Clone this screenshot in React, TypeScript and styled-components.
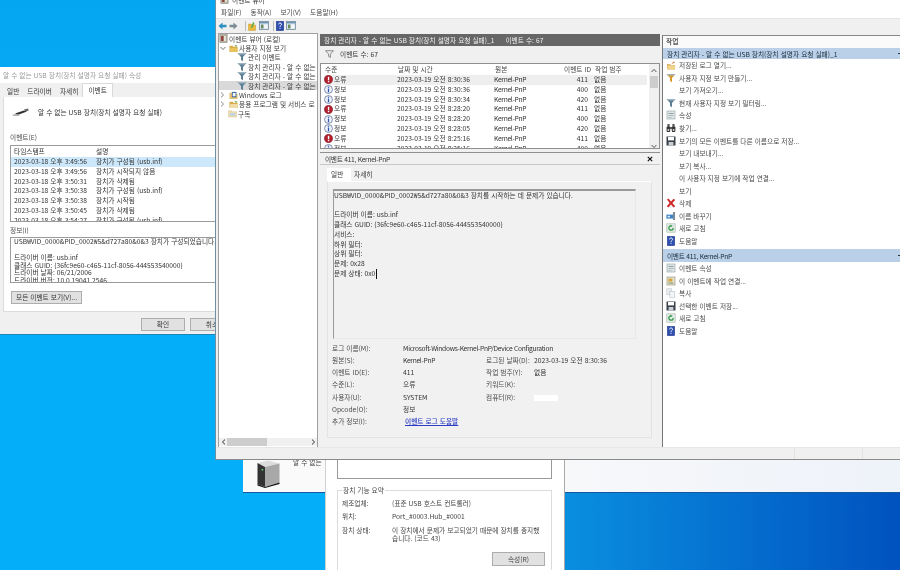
import React, { ReactNode } from "react";
import styled, { createGlobalStyle } from "styled-components";

const GlobalStyle = createGlobalStyle`
  html, body {
    margin: 0;
    padding: 0;
    background: #05aef8;
  }
  * {
    box-sizing: border-box;
  }
`;

const FONT = `"Noto Sans CJK KR", "Noto Sans", "Liberation Sans", sans-serif`;

const Desktop = styled.div`
  position: relative;
  width: 900px;
  height: 570px;
  overflow: hidden;
  font-family: ${FONT};
  font-size: 6.7px;
  word-spacing: 0.5px;
  line-height: 10px;
  color: #333;
  filter: blur(0.25px);
  background:
    linear-gradient(180deg, rgba(0, 100, 190, 0.1) 0, rgba(0, 100, 190, 0) 60%),
    linear-gradient(90deg, #05aef8 0, #05aef8 36%, #0a90e0 62%, #0052bf 100%);
`;

const Latin = styled.span`
  letter-spacing: -0.3px;
`;

/* ---------- windows on the desktop ---------- */

const Win = styled.div<{ $x: number; $y: number; $w: number; $h: number }>`
  position: absolute;
  left: ${p => p.$x}px;
  top: ${p => p.$y}px;
  width: ${p => p.$w}px;
  height: ${p => p.$h}px;
  background: #fff;
  display: flex;
  flex-direction: column;
`;

/* ---------- left properties dialog ---------- */

const PropsWindow = styled(Win)`
  background: #f0f0f0;
  border-bottom: 1px solid #1b86b8;
`;

const PropsTitle = styled.div`
  height: 16px;
  padding: 3px 3px 0;
  background: #fff;
  color: #9a9a9a;
  white-space: nowrap;
`;

const PropsTabs = styled.div`
  display: flex;
  align-items: flex-end;
  height: 14px;
  padding-left: 3px;
`;

const PropsTab = styled.div<{ $on?: boolean }>`
  height: ${p => (p.$on ? 14 : 11)}px;
  padding: ${p => (p.$on ? "1px 5px 0" : "0 4px")};
  background: ${p => (p.$on ? "#fff" : "transparent")};
  border: ${p => (p.$on ? "1px solid #d9d9d9" : "none")};
  border-bottom: none;
  white-space: nowrap;
`;

const PropsBody = styled.div`
  margin-left: 3px;
  height: 215px;
  padding-left: 6px;
  background: #fff;
  border-left: 1px solid #dcdcdc;
  border-bottom: 1px solid #dcdcdc;
`;

const DeviceRow = styled.div`
  display: flex;
  align-items: center;
  gap: 9px;
  height: 30px;
  padding-left: 2px;
  white-space: nowrap;
`;

const GroupLabel = styled.div<{ $top: number }>`
  margin-top: ${p => p.$top}px;
  height: 12px;
  line-height: 12px;
  color: #4a4a4a;
  white-space: nowrap;
`;

const EventsBox = styled.div`
  height: 77px;
  margin-top: 2px;
  border: 1px solid #9b9b9b;
  border-right: none;
  overflow: hidden;
`;

const EventsHead = styled.div`
  display: grid;
  grid-template-columns: 82px 1fr;
  height: 11px;
  padding-left: 3px;
`;

const EventsRow = styled.div<{ $on?: boolean }>`
  display: grid;
  grid-template-columns: 82px 1fr;
  height: 9.8px;
  padding-left: 3px;
  white-space: nowrap;
  line-height: 9.8px;
  background: ${p => (p.$on ? "#cde8fb" : "transparent")};
`;

const InfoBox = styled.div`
  height: 46px;
  margin-top: 1px;
  padding-left: 3px;
  border: 1px solid #9b9b9b;
  border-right: none;
  overflow: hidden;
  white-space: nowrap;
  line-height: 7.6px;
`;

const Gap = styled.div`
  height: 8.4px;
`;

const GrayButton = styled.div<{ $w: number; $h?: number }>`
  flex: none;
  width: ${p => p.$w}px;
  height: ${p => p.$h ?? 13}px;
  border: 1px solid #adadad;
  background: #e1e1e1;
  text-align: center;
  line-height: ${p => (p.$h ?? 13) - 2}px;
  white-space: nowrap;
  overflow: hidden;
`;

const AllEventsRow = styled.div`
  margin: 8px 0 0 1px;
`;

const PropsFooter = styled.div`
  display: flex;
  gap: 5px;
  padding: 6px 0 0 141px;
`;

/* ---------- event viewer ---------- */

const ViewerWindow = styled(Win)`
  background: #f0f0f0;
  border-left: 1px solid #6f8fa3;
  border-bottom: 1px solid #8a8a8a;
`;

const TitleStrip = styled.div`
  display: flex;
  align-items: flex-start;
  gap: 3px;
  height: 6px;
  padding-left: 4px;
  background: #fff;
  overflow: hidden;
  & > * {
    margin-top: -5px;
  }
`;

const MenuBar = styled.div`
  display: flex;
  gap: 9px;
  height: 13px;
  padding: 1px 0 0 5px;
  background: #fff;
  border-bottom: 1px solid #e4e4e4;
  color: #444;
`;

const ToolBar = styled.div`
  display: flex;
  align-items: center;
  height: 13px;
  padding-left: 2px;
`;

const ToolSep = styled.div<{ $l: number; $r: number }>`
  width: 1px;
  height: 10px;
  margin: 0 ${p => p.$r}px 0 ${p => p.$l}px;
  background: #bbb;
`;

const ToolSlot = styled.div<{ $r: number }>`
  display: flex;
  margin-right: ${p => p.$r}px;
`;

const ViewerBody = styled.div`
  flex: 1;
  min-height: 0;
  display: grid;
  grid-template-columns: 100px 340px 1fr;
  column-gap: 2px;
  padding: 1px 0 0 2px;
`;

const TreePane = styled.div`
  display: flex;
  flex-direction: column;
  min-width: 0;
  background: #fff;
  border: 1px solid #a0a0a0;
  border-bottom: none;
`;

const TreeRow = styled.div<{ $depth: number; $on?: boolean }>`
  display: flex;
  align-items: center;
  gap: 1px;
  height: 9.4px;
  padding-left: ${p => p.$depth}px;
  white-space: nowrap;
  overflow: hidden;
  background: ${p => (p.$on ? "#d9d9d9" : "transparent")};
  color: #3c3c3c;
`;

const ChevronSlot = styled.span`
  width: 8px;
  flex: none;
  display: flex;
`;

const TreeSpacer = styled.div`
  flex: 1;
`;

const HScroll = styled.div`
  display: flex;
  align-items: center;
  height: 8px;
  margin-bottom: 1px;
  background: #f0f0f0;
`;

const HThumb = styled.div`
  width: 40px;
  height: 8px;
  background: #cdcdcd;
`;

const HArrow = styled.span<{ $right?: boolean }>`
  display: flex;
  justify-content: center;
  width: 8px;
  margin-left: ${p => (p.$right ? "auto" : "0")};
`;

const CenterPane = styled.div`
  display: flex;
  flex-direction: column;
  min-width: 0;
  margin-top: 1px;
`;

const DarkHeader = styled.div`
  display: flex;
  gap: 11px;
  height: 12px;
  padding: 1px 0 0 4px;
  background: #666;
  color: #f0f0f0;
  white-space: nowrap;
`;

const CountBar = styled.div`
  display: flex;
  align-items: center;
  gap: 6px;
  height: 16px;
  padding-left: 5px;
`;

const ListFrame = styled.div`
  height: 86px;
  margin-top: 1px;
  display: grid;
  grid-template-columns: 1fr 10px;
  background: #fff;
  border: 1px solid #8f8f8f;
  overflow: hidden;
`;

const ListBody = styled.div`
  padding: 0 2px 0 3px;
`;

const Cols = "73px 97px 48px 52px 1fr";

const ListHead = styled.div`
  display: grid;
  grid-template-columns: ${Cols};
  height: 11px;
  line-height: 10px;
  color: #444;
  white-space: nowrap;
`;

const HeadCell = styled.span<{ $right?: boolean }>`
  padding-left: ${p => (p.$right ? "0" : "1px")};
  padding-right: ${p => (p.$right ? "3px" : "0")};
  text-align: ${p => (p.$right ? "right" : "left")};
`;

const ListRow = styled.div<{ $on?: boolean }>`
  display: grid;
  grid-template-columns: ${Cols};
  height: 9.8px;
  white-space: nowrap;
  line-height: 9.8px;
  background: ${p => (p.$on ? "#eeeeee" : "transparent")};
`;

const LevelCell = styled.span`
  display: flex;
  align-items: center;
  gap: 1px;
`;

const RightCell = styled.span`
  text-align: right;
  padding-right: 6px;
`;

const VScroll = styled.div`
  display: flex;
  flex-direction: column;
  align-items: center;
  padding-top: 4px;
  background: #f0f0f0;
`;

const VThumb = styled.div`
  width: 8px;
  height: 12px;
  margin-top: 3px;
  background: #cdcdcd;
`;

const VDown = styled.span`
  display: flex;
  margin-top: auto;
  margin-bottom: 4px;
`;

const DetailPane = styled.div`
  margin-top: 3px;
  flex: 1;
  min-height: 0;
  display: flex;
  flex-direction: column;
  background: #f1f1f1;
  border-top: 1px solid #8f8f8f;
`;

const DetailHeader = styled.div`
  display: flex;
  justify-content: space-between;
  height: 12px;
  padding: 1px 7px 0 5px;
  border-bottom: 1px solid #c9c9c9;
`;

const CloseMark = styled.span`
  display: flex;
  align-items: center;
  height: 10px;
`;

const DetailTabs = styled.div`
  display: flex;
  height: 16px;
  padding: 3px 0 0 7px;
`;

const DetailTab = styled.div<{ $on?: boolean }>`
  height: 13px;
  width: ${p => (p.$on ? 24 : 26)}px;
  padding: 1px 0 0 ${p => (p.$on ? 4 : 3)}px;
  background: ${p => (p.$on ? "#fff" : "transparent")};
  color: #333;
`;

const DetailFrame = styled.div`
  flex: 1;
  margin: 0 8px 9px 7px;
  padding: 7px 0 0 5px;
  border: 1px solid #e3e3e3;
  border-top-color: #fff;
`;

const MessageBox = styled.div`
  width: 303px;
  height: 150px;
  border: 1px solid #9a9a9a;
  border-top-width: 2px;
  border-right-color: #e8e8e8;
  border-bottom-color: #e8e8e8;
  color: #333;
  white-space: nowrap;
  line-height: 9.7px;
`;

const Caret = styled.span`
  display: inline-block;
  width: 1px;
  height: 10px;
  margin-left: 1px;
  vertical-align: top;
  background: #111;
`;

const MetaGrid = styled.div`
  display: grid;
  grid-template-columns: 71px 83px 48px 1fr;
  grid-auto-rows: 12.3px;
  margin: 2.5px 0 0 -1px;
  white-space: nowrap;
  line-height: 12.3px;
`;

const MetaLabel = styled.span`
  color: #4a4a4a;
`;

const MetaWide = styled.span`
  grid-column: 2 / 5;
`;

const HelpLink = styled.a`
  grid-column: 2 / 5;
  margin-left: 2px;
  color: #2a3cc4;
  font-weight: 500;
  text-decoration: underline;
`;

const Redacted = styled.span`
  display: inline-block;
  width: 24px;
  height: 6px;
  background: #fff;
  vertical-align: middle;
`;

const ActionsPane = styled.div`
  display: flex;
  flex-direction: column;
  min-width: 0;
  margin-top: 2px;
  background: #fff;
  border-left: 1px solid #777;
  border-top: 1px solid #888;
`;

const ActionsTitle = styled.div`
  height: 12px;
  padding: 0 0 0 3px;
  color: #222;
  font-weight: 500;
  background: #fafafa;
  line-height: 11px;
`;

const ActionHeader = styled.div<{ $top?: number }>`
  display: flex;
  align-items: center;
  justify-content: space-between;
  flex: none;
  height: ${p => (p.$top ? 12.6 : 11)}px;
  margin-top: ${p => p.$top ?? 0}px;
  padding-left: 4px;
  background: #b9d0e8;
  color: #20303f;
  white-space: nowrap;
`;

const HeaderTick = styled.span`
  width: 2px;
  height: 1px;
  background: #333;
`;

const ActionRow = styled.div`
  display: flex;
  align-items: center;
  flex: none;
  height: 12.55px;
  padding-left: 3px;
  gap: 3px;
  white-space: nowrap;
  color: #4a4a4a;
`;

const IconSlot = styled.span`
  width: 10px;
  height: 10px;
  flex: none;
  display: flex;
  align-items: center;
  justify-content: center;
`;

const StatusBar = styled.div`
  display: flex;
  flex: none;
  height: 12px;
  border-top: 1px solid #e6e6e6;
`;

const StatusCell = styled.div<{ $w: number }>`
  width: ${p => p.$w}px;
  border-right: 1px solid #e2e2e2;
`;

/* ---------- windows behind the viewer ---------- */

const DevicePanel = styled(Win)`
  flex-direction: row;
  align-items: flex-start;
  gap: 13px;
  padding: 5px 0 0 14px;
  color: #444;
  background: linear-gradient(90deg, #fafafa 0, #f7f8fa 50%, #eef2f9 100%);
  border-bottom: 1px solid #14599f;
`;

const DeviceName = styled.span`
  margin-top: -3px;
  white-space: nowrap;
`;

const DeviceDialog = styled(Win)`
  padding: 0 12px 0 11px;
  border-left: 1px solid #d0d0d0;
  border-right: 1px solid #a8a8a8;
`;

const ListRemnant = styled.div`
  flex: none;
  height: 29px;
  border: 1px solid #999;
  border-top: none;
`;

const SummaryBox = styled.fieldset`
  flex: none;
  margin: 7px 0 0;
  padding: 4px 6px 0 4px;
  min-width: 0;
  height: 85px;
  border: 1px solid #dcdcdc;
  border-bottom: none;
  color: #444;
  legend {
    padding: 0 1px;
    margin-left: 0;
    line-height: 9px;
  }
`;

const SummaryGrid = styled.div`
  display: grid;
  grid-template-columns: 50px 1fr;
  grid-auto-rows: 13.3px;
  line-height: 8px;
  white-space: nowrap;
`;

const SummaryButtonRow = styled.div`
  display: flex;
  justify-content: flex-end;
  margin-top: 13px;
`;

/* ---------- icons ---------- */

const ErrorIcon = () => (
  <svg width="9" height="9" viewBox="0 0 10 10">
    <circle cx="5" cy="5" r="4.6" fill="#b3202c" stroke="#7a1a2a" strokeWidth="0.6" />
    <rect x="4.3" y="2" width="1.5" height="3.8" fill="#fff" />
    <rect x="4.3" y="6.5" width="1.5" height="1.5" fill="#fff" />
  </svg>
);

const InfoIcon = () => (
  <svg width="9" height="9" viewBox="0 0 10 10">
    <circle cx="5" cy="5" r="4.4" fill="#eef3fb" stroke="#56698f" strokeWidth="0.8" />
    <rect x="4.3" y="1.8" width="1.4" height="1.3" fill="#2c55a8" />
    <rect x="4.3" y="3.9" width="1.4" height="4.2" fill="#2c55a8" />
  </svg>
);

const Funnel = ({ color = "#5d7f94", size = 9 }: { color?: string; size?: number }) => (
  <svg width={size} height={size} viewBox="0 0 10 10" style={{ flex: "none" }}>
    <path d="M0.5 1h9L6 5v4.2L4 8V5z" fill={color} />
    <path d="M0.5 1h9L8 2.6H2z" fill="#9eb3c1" />
  </svg>
);

const OutlineFunnel = () => (
  <svg width="9" height="8" viewBox="0 0 10 9">
    <path d="M0.5 0.8h9L6 4.6v3.8L4 7.2V4.6z" fill="#eee" stroke="#666" strokeWidth="0.8" />
  </svg>
);

const FolderIcon = ({ open = "#e9c25c" }: { open?: string }) => (
  <svg width="9" height="9" viewBox="0 0 10 10" style={{ flex: "none" }}>
    <path d="M0.5 2h3.5l1 1h4.5v6h-9z" fill="#d9ac4a" />
    <path d="M1.5 4.5h8.2l-1 4.5h-8.2z" fill={open} />
    <path d="M6 0.8l3 1-1 1.4z" fill="#5b9c4a" />
  </svg>
);

const ViewerIcon = () => (
  <svg width="9" height="9" viewBox="0 0 10 10" style={{ flex: "none" }}>
    <rect x="1" y="0.8" width="8" height="8.4" fill="#b9b6a6" stroke="#77736a" strokeWidth="0.6" />
    <rect x="2.4" y="2.2" width="2.6" height="5.6" fill="#8f3d3a" />
    <rect x="5.6" y="2.2" width="2" height="5.6" fill="#e8e6da" />
  </svg>
);

const LogBookIcon = () => (
  <svg width="9" height="9" viewBox="0 0 10 10" style={{ flex: "none" }}>
    <path d="M0.5 2h3.5l1 1h4.5v6h-9z" fill="#e2c170" />
    <rect x="3.2" y="1" width="5" height="6" fill="#3f6fa8" />
    <rect x="4.2" y="2.2" width="3" height="3.6" fill="#fff" />
  </svg>
);

const SubscribeIcon = () => (
  <svg width="9" height="9" viewBox="0 0 10 10" style={{ flex: "none" }}>
    <path d="M0.5 2h3.5l1 1h4.5v6h-9z" fill="#efdca8" stroke="#c9b37e" strokeWidth="0.4" />
    <rect x="2" y="4.5" width="6" height="3" fill="#bcd3ea" />
  </svg>
);

const ChevronDown = ({ color = "#777" }: { color?: string }) => (
  <svg width="6" height="5" viewBox="0 0 6 5">
    <path d="M0.6 1l2.4 2.6L5.4 1" fill="none" stroke={color} strokeWidth="1" />
  </svg>
);

const ChevronUp = ({ color = "#555" }: { color?: string }) => (
  <svg width="6" height="5" viewBox="0 0 6 5">
    <path d="M0.6 4L3 1.4 5.4 4" fill="none" stroke={color} strokeWidth="1" />
  </svg>
);

const ChevronRight = ({ color = "#888" }: { color?: string }) => (
  <svg width="5" height="6" viewBox="0 0 5 6">
    <path d="M1 0.6L3.6 3 1 5.4" fill="none" stroke={color} strokeWidth="1" />
  </svg>
);

const ChevronLeft = ({ color = "#333" }: { color?: string }) => (
  <svg width="5" height="6" viewBox="0 0 5 6">
    <path d="M4 0.6L1.4 3 4 5.4" fill="none" stroke={color} strokeWidth="1" />
  </svg>
);

const ArrowIcon = ({ right, color }: { right?: boolean; color: string }) => (
  <svg width="9" height="8" viewBox="0 0 10 9">
    <path
      d={right ? "M0.5 3h4.5V0.6L9.5 4.5 5 8.4V6H0.5z" : "M9.5 3H5V0.6L0.5 4.5 5 8.4V6h4.5z"}
      fill={color}
    />
  </svg>
);

const PaneIcon = () => (
  <svg width="10" height="9" viewBox="0 0 10 9">
    <rect x="0.4" y="0.4" width="9.2" height="8.2" fill="#d4e3ef" stroke="#64808f" strokeWidth="0.7" />
    <rect x="0.8" y="0.8" width="8.4" height="1.6" fill="#6d95b3" />
    <rect x="2" y="3.6" width="2.4" height="3.8" fill="#6a8a5c" />
    <rect x="5.2" y="3.6" width="3.2" height="3.8" fill="#f7f7f7" />
  </svg>
);

const ToolFolder = () => (
  <svg width="8" height="10" viewBox="0 0 10 10" preserveAspectRatio="none">
    <path d="M0.5 3h3.4l1 1h4.6v5.5h-9z" fill="#e8b93c" stroke="#b98d22" strokeWidth="0.4" />
    <path d="M3.5 6.2L6.5 1l1.6 1-3 5z" fill="#5fa845" />
  </svg>
);

const HelpIcon = ({ w = 8, h = 10 }: { w?: number; h?: number }) => (
  <svg width={w} height={h} viewBox="0 0 8 10" preserveAspectRatio="none">
    <rect x="0.3" y="0.3" width="7.4" height="9.4" fill="#2f4fb0" stroke="#1f3480" strokeWidth="0.5" />
    <path
      d="M2.6 3.4C2.6 2.4 3.3 2 4 2c.9 0 1.5.5 1.5 1.3 0 1.2-1.5 1.2-1.5 2.6"
      fill="none"
      stroke="#fff"
      strokeWidth="1"
    />
    <rect x="3.5" y="6.8" width="1" height="1" fill="#fff" />
  </svg>
);

const OpenLogIcon = () => (
  <svg width="10" height="10" viewBox="0 0 10 10">
    <path d="M1 4h3l1 1h4v4.4H1z" fill="#dcb56a" />
    <path d="M2 5.6h7.6L8.4 9.4H1z" fill="#f0d48d" />
    <path d="M5.4 4L8 1.2l.8 1.6z" fill="#d2733a" />
  </svg>
);

const SheetIcon = () => (
  <svg width="10" height="10" viewBox="0 0 10 10">
    <rect x="1" y="1" width="8" height="8" fill="#dfe5e6" stroke="#8fa0a6" strokeWidth="0.6" />
    <rect x="2.5" y="3" width="5" height="0.9" fill="#8a9aa0" />
    <rect x="2.5" y="5" width="5" height="0.9" fill="#a8b4b8" />
    <rect x="2.5" y="7" width="3" height="0.7" fill="#a8b4b8" />
  </svg>
);

const TaskSheetIcon = () => (
  <svg width="10" height="10" viewBox="0 0 10 10">
    <rect x="1" y="1" width="8" height="8" fill="#e5e3cf" stroke="#8c8a76" strokeWidth="0.6" />
    <rect x="2.4" y="2.6" width="4" height="3" fill="#d9a641" />
    <rect x="2.4" y="6.6" width="5" height="0.9" fill="#6c8a5a" />
  </svg>
);

const FindIcon = () => (
  <svg width="10" height="10" viewBox="0 0 10 10">
    <rect x="0.6" y="3.4" width="3.6" height="5.6" rx="1" fill="#333" />
    <rect x="5.8" y="3.4" width="3.6" height="5.6" rx="1" fill="#333" />
    <rect x="3.6" y="4" width="2.8" height="2" fill="#555" />
    <rect x="1.4" y="1" width="2.2" height="3" fill="#555" />
    <rect x="6.4" y="1" width="2.2" height="3" fill="#555" />
    <circle cx="2.4" cy="7" r="1" fill="#cfd8dc" />
    <circle cx="7.6" cy="7" r="1" fill="#cfd8dc" />
  </svg>
);

const SaveIcon = () => (
  <svg width="10" height="10" viewBox="0 0 10 10">
    <rect x="0.5" y="0.5" width="9" height="9" fill="#39424a" />
    <rect x="2" y="1" width="6" height="3.4" fill="#fff" />
    <rect x="2.6" y="6" width="4.8" height="3.5" fill="#c9ced2" />
  </svg>
);

const DeleteIcon = () => (
  <svg width="10" height="10" viewBox="0 0 10 10">
    <path d="M1 1.6l1.6-1L5 3.4 7.6.8l1.6 1.2L6.4 5l2.8 3.2-1.6 1.2L5 6.6 2.4 9.4.8 8.2 3.6 5z" fill="#cf2a2a" />
  </svg>
);

const RenameIcon = () => (
  <svg width="10" height="10" viewBox="0 0 10 10">
    <rect x="0.4" y="3.6" width="7" height="4" fill="#3f86c6" />
    <rect x="1.6" y="4.8" width="2.4" height="1.6" fill="#d8ecfa" />
    <rect x="7" y="1" width="2" height="8" fill="#7a8a96" />
  </svg>
);

const RefreshIcon = () => (
  <svg width="10" height="10" viewBox="0 0 10 10">
    <rect x="0.8" y="0.8" width="8.4" height="8.4" fill="#e3ebe6" stroke="#a4b3ac" strokeWidth="0.6" />
    <path d="M7.2 5A2.2 2.2 0 1 1 5 2.8" fill="none" stroke="#3a9c4e" strokeWidth="1.3" />
    <path d="M4.4 1.4L6.8 2.9 4.4 4.3z" fill="#3a9c4e" />
  </svg>
);

const CopyIcon = () => (
  <svg width="10" height="10" viewBox="0 0 10 10">
    <rect x="0.8" y="0.8" width="5" height="6" fill="#e9edf0" stroke="#b6c0c7" strokeWidth="0.5" />
    <rect x="3.8" y="3.4" width="5" height="6" fill="#f2f4f6" stroke="#aeb9c1" strokeWidth="0.5" />
  </svg>
);

const CloseIcon = () => (
  <svg width="6" height="6" viewBox="0 0 6 6">
    <path d="M0.8 0.8l4.4 4.4M5.2 0.8L0.8 5.2" stroke="#111" strokeWidth="1.2" />
  </svg>
);

const UsbIcon = () => (
  <svg width="17" height="8" viewBox="0 0 17 8">
    <path d="M3 5.6L12 2.6l3 1-9 3.2z" fill="#2e2e2e" />
    <path d="M12 1.4L16 0.6l.8 1.8L13.6 3.6z" fill="#666" />
    <ellipse cx="4" cy="7" rx="3.8" ry="0.8" fill="#9a9a9a" />
  </svg>
);

const HubIcon = () => (
  <svg width="23" height="28" viewBox="0 0 23 28">
    <path d="M0.5 3L11 0.5l11.5 3L8 7z" fill="#dcdcdc" />
    <path d="M8 7l14.5-3.5v19L8 27z" fill="#a8a8a8" />
    <path d="M0.5 3L8 7v20l-7.5-3z" fill="#333" />
    <rect x="4.6" y="9" width="1.6" height="1.6" fill="#5fd06a" />
    <path d="M0.5 24L8 27l14.5-4.5V24L8 28 .5 25.5z" fill="#111" />
  </svg>
);

/* ---------- data ---------- */

const dialogEvents: [string, string][] = [
  ["2023-03-18 오후 3:49:56", "장치가 구성됨 (usb.inf)"],
  ["2023-03-18 오후 3:49:56", "장치가 시작되지 않음"],
  ["2023-03-18 오후 3:50:31", "장치가 삭제됨"],
  ["2023-03-18 오후 3:50:38", "장치가 구성됨 (usb.inf)"],
  ["2023-03-18 오후 3:50:38", "장치가 시작됨"],
  ["2023-03-18 오후 3:50:45", "장치가 삭제됨"],
  ["2023-03-18 오후 3:54:27", "장치가 구성됨 (usb.inf)"]
];

const listEvents: [boolean, string, string][] = [
  [true, "2023-03-19 오전 8:30:36", "411"],
  [false, "2023-03-19 오전 8:30:36", "400"],
  [false, "2023-03-19 오전 8:30:34", "420"],
  [true, "2023-03-19 오전 8:28:20", "411"],
  [false, "2023-03-19 오전 8:28:20", "400"],
  [false, "2023-03-19 오전 8:28:05", "420"],
  [true, "2023-03-19 오전 8:25:16", "411"],
  [false, "2023-03-19 오전 8:25:16", "400"]
];

const viewActions: [ReactNode, string][] = [
  [<OpenLogIcon />, "저장된 로그 열기..."],
  [<Funnel color="#d99a2b" size={10} />, "사용자 지정 보기 만들기..."],
  [null, "보기 가져오기..."],
  [<Funnel size={10} />, "현재 사용자 지정 보기 필터링..."],
  [<SheetIcon />, "속성"],
  [<FindIcon />, "찾기..."],
  [<SaveIcon />, "보기의 모든 이벤트를 다른 이름으로 저장..."],
  [null, "보기 내보내기..."],
  [null, "보기 복사..."],
  [null, "이 사용자 지정 보기에 작업 연결..."],
  [null, "보기"],
  [<DeleteIcon />, "삭제"],
  [<RenameIcon />, "이름 바꾸기"],
  [<RefreshIcon />, "새로 고침"],
  [<HelpIcon />, "도움말"]
];

const eventActions: [ReactNode, string][] = [
  [<SheetIcon />, "이벤트 속성"],
  [<TaskSheetIcon />, "이 이벤트에 작업 연결..."],
  [<CopyIcon />, "복사"],
  [<SaveIcon />, "선택한 이벤트 저장..."],
  [<RefreshIcon />, "새로 고침"],
  [<HelpIcon />, "도움말"]
];

const App: React.FC = () => {
  return (
    <Desktop>
      <GlobalStyle />

      <PropsWindow $x={0} $y={67} $w={216} $h={268}>
        <PropsTitle>알 수 없는 USB 장치(장치 설명자 요청 실패) 속성</PropsTitle>
        <PropsTabs>
          <PropsTab>일반</PropsTab>
          <PropsTab>드라이버</PropsTab>
          <PropsTab>자세히</PropsTab>
          <PropsTab $on>이벤트</PropsTab>
        </PropsTabs>
        <PropsBody>
          <DeviceRow>
            <UsbIcon />
            <span>알 수 없는 USB 장치(장치 설명자 요청 실패)</span>
          </DeviceRow>
          <GroupLabel $top={4}>이벤트(E)</GroupLabel>
          <EventsBox>
            <EventsHead>
              <span>타임스탬프</span>
              <span>설명</span>
            </EventsHead>
            {dialogEvents.map((ev, i) => (
              <EventsRow key={i} $on={i === 0}>
                <span>{ev[0]}</span>
                <span>{ev[1]}</span>
              </EventsRow>
            ))}
          </EventsBox>
          <GroupLabel $top={2}>정보(I)</GroupLabel>
          <InfoBox>
            USB₩VID_0000&amp;PID_0002₩5&amp;d727a80&amp;0&amp;3 장치가 구성되었습니다.
            <Gap />
            드라이버 이름: usb.inf
            <br />
            클래스 GUID: {"{36fc9e60-c465-11cf-8056-444553540000}"}
            <br />
            드라이버 날짜: 06/21/2006
            <br />
            드라이버 버전: 10.0.19041.2546
          </InfoBox>
          <AllEventsRow>
            <GrayButton $w={71}>모든 이벤트 보기(V)...</GrayButton>
          </AllEventsRow>
        </PropsBody>
        <PropsFooter>
          <GrayButton $w={44}>확인</GrayButton>
          <GrayButton $w={44}>취소</GrayButton>
        </PropsFooter>
      </PropsWindow>

      <DevicePanel $x={243} $y={455} $w={657} $h={38}>
        <HubIcon />
        <DeviceName>알 수 없는</DeviceName>
      </DevicePanel>

      <DeviceDialog $x={325} $y={450} $w={240} $h={120}>
        <ListRemnant />
        <SummaryBox>
          <legend>장치 기능 요약</legend>
          <SummaryGrid>
            <span>제조업체:</span>
            <span>(표준 USB 호스트 컨트롤러)</span>
            <span>위치:</span>
            <span>Port_#0003.Hub_#0001</span>
            <span>장치 상태:</span>
            <span>
              이 장치에서 문제가 보고되었기 때문에 장치를 중지했
              <br />
              습니다. (코드 43)
            </span>
          </SummaryGrid>
          <SummaryButtonRow>
            <GrayButton $w={53} $h={14}>
              속성(R)
            </GrayButton>
          </SummaryButtonRow>
        </SummaryBox>
      </DeviceDialog>

      <ViewerWindow $x={215} $y={0} $w={685} $h={460}>
        <TitleStrip>
          <ViewerIcon />
          <span>이벤트 뷰어</span>
        </TitleStrip>
        <MenuBar>
          <span>파일(F)</span>
          <span>동작(A)</span>
          <span>보기(V)</span>
          <span>도움말(H)</span>
        </MenuBar>
        <ToolBar>
          <ToolSlot $r={2}>
            <ArrowIcon color="#2f8fc0" />
          </ToolSlot>
          <ToolSlot $r={0}>
            <ArrowIcon right color="#7d8b94" />
          </ToolSlot>
          <ToolSep $l={7} $r={2} />
          <ToolSlot $r={3}>
            <ToolFolder />
          </ToolSlot>
          <PaneIcon />
          <ToolSep $l={4} $r={2} />
          <ToolSlot $r={2}>
            <HelpIcon />
          </ToolSlot>
          <PaneIcon />
        </ToolBar>
        <ViewerBody>
          <TreePane>
            <TreeRow $depth={0}>
              <ViewerIcon />
              이벤트 뷰어 (로컬)
            </TreeRow>
            <TreeRow $depth={1}>
              <ChevronSlot>
                <ChevronDown />
              </ChevronSlot>
              <FolderIcon />
              사용자 지정 보기
            </TreeRow>
            <TreeRow $depth={18}>
              <Funnel size={10} />
              관리 이벤트
            </TreeRow>
            <TreeRow $depth={18}>
              <Funnel size={10} />
              장치 관리자 - 알 수 없는
            </TreeRow>
            <TreeRow $depth={18}>
              <Funnel size={10} />
              장치 관리자 - 알 수 없는
            </TreeRow>
            <TreeRow $depth={18} $on>
              <Funnel size={10} />
              장치 관리자 - 알 수 없는
            </TreeRow>
            <TreeRow $depth={1}>
              <ChevronSlot>
                <ChevronRight />
              </ChevronSlot>
              <LogBookIcon />
              Windows 로그
            </TreeRow>
            <TreeRow $depth={1}>
              <ChevronSlot>
                <ChevronRight />
              </ChevronSlot>
              <FolderIcon open="#efdca8" />
              응용 프로그램 및 서비스 로
            </TreeRow>
            <TreeRow $depth={9}>
              <SubscribeIcon />
              구독
            </TreeRow>
            <TreeSpacer />
            <HScroll>
              <HArrow>
                <ChevronLeft />
              </HArrow>
              <HThumb />
              <HArrow $right>
                <ChevronRight color="#333" />
              </HArrow>
            </HScroll>
          </TreePane>

          <CenterPane>
            <DarkHeader>
              <span>장치 관리자 - 알 수 없는 USB 장치(장치 설명자 요청 실패)_1</span>
              <span>이벤트 수: 67</span>
            </DarkHeader>
            <CountBar>
              <OutlineFunnel />
              이벤트 수: 67
            </CountBar>
            <ListFrame>
              <ListBody>
                <ListHead>
                  <HeadCell>수준</HeadCell>
                  <HeadCell>날짜 및 시간</HeadCell>
                  <HeadCell>원본</HeadCell>
                  <HeadCell $right>이벤트 ID</HeadCell>
                  <HeadCell>작업 범주</HeadCell>
                </ListHead>
                {listEvents.map((ev, i) => (
                  <ListRow key={i} $on={i === 0}>
                    <LevelCell>
                      {ev[0] ? <ErrorIcon /> : <InfoIcon />}
                      {ev[0] ? "오류" : "정보"}
                    </LevelCell>
                    <span>{ev[1]}</span>
                    <Latin>Kernel-PnP</Latin>
                    <RightCell>{ev[2]}</RightCell>
                    <span>없음</span>
                  </ListRow>
                ))}
              </ListBody>
              <VScroll>
                <ChevronUp />
                <VThumb />
                <VDown>
                  <ChevronDown color="#555" />
                </VDown>
              </VScroll>
            </ListFrame>

            <DetailPane>
              <DetailHeader>
                <Latin>이벤트 411, Kernel-PnP</Latin>
                <CloseMark>
                  <CloseIcon />
                </CloseMark>
              </DetailHeader>
              <DetailTabs>
                <DetailTab $on>일반</DetailTab>
                <DetailTab>자세히</DetailTab>
              </DetailTabs>
              <DetailFrame>
                <MessageBox>
                  USB₩VID_0000&amp;PID_0002₩5&amp;d727a80&amp;0&amp;3 장치를 시작하는 데 문제가 있습니다.
                  <br />
                  <br />
                  드라이버 이름: usb.inf
                  <br />
                  클래스 GUID: {"{36fc9e60-c465-11cf-8056-444553540000}"}
                  <br />
                  서비스:
                  <br />
                  하위 필터:
                  <br />
                  상위 필터:
                  <br />
                  문제: 0x28
                  <br />
                  문제 상태: 0x0
                  <Caret />
                </MessageBox>
                <MetaGrid>
                  <MetaLabel>로그 이름(M):</MetaLabel>
                  <MetaWide>
                    <Latin>Microsoft-Windows-Kernel-PnP/Device Configuration</Latin>
                  </MetaWide>
                  <MetaLabel>원본(S):</MetaLabel>
                  <Latin>Kernel-PnP</Latin>
                  <MetaLabel>로그된 날짜(D):</MetaLabel>
                  <span>2023-03-19 오전 8:30:36</span>
                  <MetaLabel>이벤트 ID(E):</MetaLabel>
                  <span>411</span>
                  <MetaLabel>작업 범주(Y):</MetaLabel>
                  <span>없음</span>
                  <MetaLabel>수준(L):</MetaLabel>
                  <span>오류</span>
                  <MetaLabel>키워드(K):</MetaLabel>
                  <span />
                  <MetaLabel>사용자(U):</MetaLabel>
                  <span>SYSTEM</span>
                  <MetaLabel>컴퓨터(R):</MetaLabel>
                  <span>
                    <Redacted />
                  </span>
                  <MetaLabel>Opcode(O):</MetaLabel>
                  <MetaWide>정보</MetaWide>
                  <MetaLabel>추가 정보(I):</MetaLabel>
                  <HelpLink>이벤트 로그 도움말</HelpLink>
                </MetaGrid>
              </DetailFrame>
            </DetailPane>
          </CenterPane>

          <ActionsPane>
            <ActionsTitle>작업</ActionsTitle>
            <ActionHeader>
              <span>장치 관리자 - 알 수 없는 USB 장치(장치 설명자 요청 실패)_1</span>
              <HeaderTick />
            </ActionHeader>
            {viewActions.map((a, i) => (
              <ActionRow key={i}>
                <IconSlot>{a[0]}</IconSlot>
                {a[1]}
              </ActionRow>
            ))}
            <ActionHeader $top={2}>
              <Latin>이벤트 411, Kernel-PnP</Latin>
              <HeaderTick />
            </ActionHeader>
            {eventActions.map((a, i) => (
              <ActionRow key={i}>
                <IconSlot>{a[0]}</IconSlot>
                {a[1]}
              </ActionRow>
            ))}
          </ActionsPane>
        </ViewerBody>
        <StatusBar>
          <StatusCell $w={579} />
          <StatusCell $w={68} />
        </StatusBar>
      </ViewerWindow>
    </Desktop>
  );
};

export default App;
